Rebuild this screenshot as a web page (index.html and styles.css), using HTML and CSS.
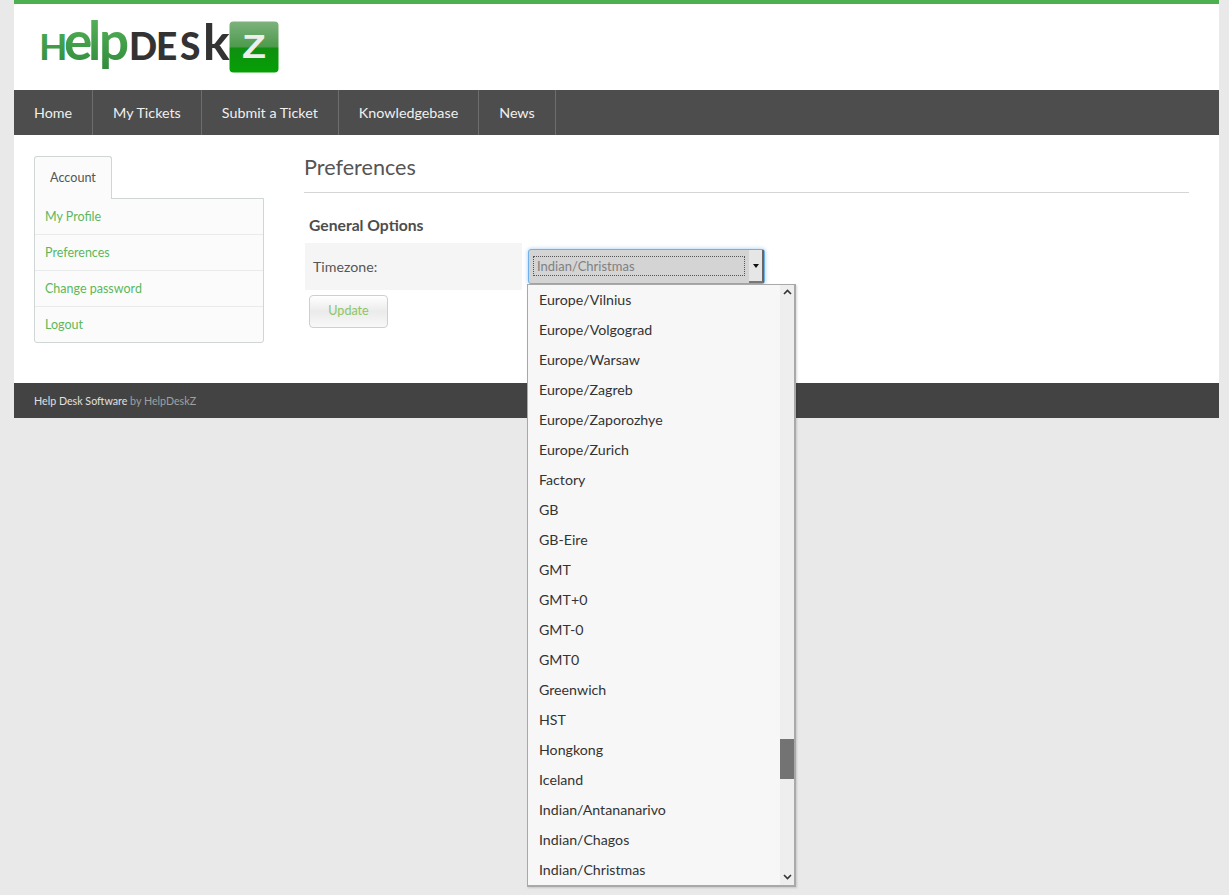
FILE: index.html
```html
<!DOCTYPE html>
<html lang="en">
<head>
  <meta charset="UTF-8" />
  <meta name="viewport" content="width=device-width, initial-scale=1.0" />
  <title>Preferences</title>
  <link rel="stylesheet" href="styles.css">
</head>
<body>
  <div class="wrapper">
    <header class="header">
      <svg class="logo" width="242" height="56" viewBox="0 0 242 56" xmlns="http://www.w3.org/2000/svg">
        <defs>
          <linearGradient id="help" x1="0" y1="0" x2="0" y2="1">
            <stop offset="0" stop-color="#5cb85c"/>
            <stop offset="1" stop-color="#2f8a3c"/>
          </linearGradient>
          <linearGradient id="box" x1="0" y1="0" x2="0" y2="1">
            <stop offset="0" stop-color="#7db27d"/>
            <stop offset="0.5" stop-color="#4c9a4c"/>
            <stop offset="0.52" stop-color="#0f8f0f"/>
            <stop offset="1" stop-color="#05a005"/>
          </linearGradient>
        </defs>
        <text y="40" class="logo-word" fill="url(#help)"><tspan x="0" class="logo-cap">H</tspan><tspan x="25" class="logo-low">e</tspan><tspan x="49" class="logo-low">l</tspan><tspan x="60" class="logo-low">p</tspan></text>
        <text y="40" class="logo-word logo-dark" fill="#333333"><tspan x="90" class="logo-cap">D</tspan><tspan x="117" class="logo-cap">E</tspan><tspan x="141" class="logo-cap">S</tspan><tspan x="164" class="logo-k">k</tspan></text>
        <rect x="190.5" y="1.5" width="49" height="51" rx="4" fill="url(#box)"/>
        <text x="203" y="38" class="logo-z" fill="#eeeeee" textLength="24" lengthAdjust="spacingAndGlyphs">Z</text>
      </svg>
    </header>

    <nav class="nav">
      <a href="#">Home</a>
      <a href="#">My Tickets</a>
      <a href="#">Submit a Ticket</a>
      <a href="#">Knowledgebase</a>
      <a href="#">News</a>
    </nav>

    <div class="content">
      <aside class="sidebar">
        <div class="tab">Account</div>
        <ul class="side-menu">
          <li><a href="#">My Profile</a></li>
          <li><a href="#">Preferences</a></li>
          <li><a href="#">Change password</a></li>
          <li><a href="#">Logout</a></li>
        </ul>
      </aside>

      <main class="main">
        <h1>Preferences</h1>
        <h2>General Options</h2>
        <div class="form-row">
          <div class="form-label">Timezone:</div>
          <div class="form-field">
            <div class="select">
              <span class="select-value"><span>Indian/Christmas</span></span>
              <span class="select-btn"><span class="caret"></span></span>
            </div>
            <div class="dropdown">
              <ul class="options" id="options"></ul>
              <div class="scrollbar">
                <svg class="arrow-up" width="9" height="6" viewBox="0 0 9 6"><path d="M1 5 L4.5 1.5 L8 5" fill="none" stroke="#333" stroke-width="1.6"/></svg>
                <div class="thumb"></div>
                <svg class="arrow-down" width="9" height="6" viewBox="0 0 9 6"><path d="M1 1 L4.5 4.5 L8 1" fill="none" stroke="#333" stroke-width="1.6"/></svg>
              </div>
            </div>
          </div>
        </div>
        <button class="btn" type="button">Update</button>
      </main>
    </div>

    <footer class="footer">Help Desk Software <span>by HelpDeskZ</span></footer>
  </div>

  <script>
    const zones = ['Europe/Vilnius', 'Europe/Volgograd', 'Europe/Warsaw', 'Europe/Zagreb', 'Europe/Zaporozhye',
      'Europe/Zurich', 'Factory', 'GB', 'GB-Eire', 'GMT', 'GMT+0', 'GMT-0', 'GMT0', 'Greenwich', 'HST',
      'Hongkong', 'Iceland', 'Indian/Antananarivo', 'Indian/Chagos', 'Indian/Christmas'];
    const list = document.getElementById('options');
    zones.forEach(zone => {
      const li = document.createElement('li');
      li.textContent = zone;
      list.appendChild(li);
    });
  </script>
</body>
</html>
```

FILE: styles.css
```css
html, body {
  height: 100%;
}
body {
  font-family: Lato, "Open Sans", sans-serif;
  margin: 0;
  padding: 0 10px 0 14px;
  background-color: #e9e9e9;
  color: #555555;
  font-size: 14px;
}
a {
  text-decoration: none;
}
ul {
  list-style: none;
  margin: 0;
  padding: 0;
}
.wrapper {
  background: white;
  border-top: 4px solid #4caf50;
}
.header {
  height: 86px;
  box-sizing: border-box;
  padding: 16px 0 0 25px;
}
.logo {
  display: block;
  overflow: visible;
}
.logo-word {
  font-family: Lato, sans-serif;
  font-weight: 700;
}
.logo-dark {
  font-weight: 900;
}
.logo-cap {
  font-size: 37px;
}
.logo-low {
  font-size: 53px;
}
.logo-k {
  font-size: 50px;
  font-weight: 700;
}
.logo-z {
  font-family: "Liberation Sans", sans-serif;
  font-size: 33px;
  font-weight: 700;
}
.nav {
  display: flex;
  height: 45px;
  background: #4d4d4d;
}
.nav a {
  padding: 0 20px;
  line-height: 45px;
  color: #f0f0f0;
  font-size: 14.3px;
  border-right: 1px solid #6d6d6d;
}
.content {
  display: flex;
  height: 248px;
  box-sizing: border-box;
  padding: 21px 30px 0 20px;
}
.sidebar {
  width: 230px;
  margin-right: 40px;
  flex-shrink: 0;
}
.tab {
  width: 78px;
  height: 43px;
  box-sizing: border-box;
  line-height: 42px;
  text-align: center;
  font-size: 12.6px;
  background: #fbfbfb;
  border: 1px solid #d0d5d5;
  border-bottom: none;
  border-radius: 3px 3px 0 0;
  position: relative;
  z-index: 1;
}
.side-menu {
  margin-top: -1px;
  background: #fbfbfb;
  border: 1px solid #d0d5d5;
  border-radius: 0 0 3px 3px;
}
.side-menu li {
  height: 36px;
  box-sizing: border-box;
  padding-left: 10px;
  line-height: 35px;
  font-size: 12.5px;
  border-bottom: 1px solid #e9eaea;
}
.side-menu li:last-child {
  border-bottom: none;
  height: 35px;
}
.side-menu a {
  color: #5cb85c;
}
.main {
  flex: 1;
}
h1 {
  margin: 0 0 20px;
  padding-bottom: 14px;
  line-height: 22px;
  font-size: 21.6px;
  font-weight: normal;
  border-bottom: 1px solid #d5d5d5;
}
h2 {
  margin: 0 0 6px 5px;
  font-size: 15.7px;
  line-height: 24px;
  color: #4d4d4d;
}
.form-row {
  display: flex;
  height: 47px;
}
.form-label {
  width: 217px;
  margin-left: 1px;
  box-sizing: border-box;
  padding-left: 8px;
  line-height: 47px;
  background: #f5f5f5;
  font-size: 14.2px;
}
.form-field {
  position: relative;
  flex: 1;
  padding: 6px 0 0 6px;
}
.select {
  display: flex;
  width: 237px;
  height: 35px;
  box-sizing: border-box;
  background: #d4d4d4;
  border: 1px solid #70b0e8;
  border-radius: 3px;
  box-shadow: 0 0 4px rgba(100, 170, 230, 0.6);
}
.select-value {
  flex: 1;
  padding: 6px 4px 6px 4px;
}
.select-value span {
  display: block;
  height: 20px;
  line-height: 19px;
  box-sizing: border-box;
  padding-left: 3px;
  font-size: 13px;
  color: #808080;
  border: 1px dotted #555;
}
.select-btn {
  display: flex;
  align-items: center;
  justify-content: center;
  width: 13px;
  background: #e6e6e6;
  border-right: 2px solid #666;
  border-bottom: 2px solid #777;
}
.caret {
  border-top: 4px solid #111;
  border-left: 3px solid transparent;
  border-right: 3px solid transparent;
}
.dropdown {
  position: absolute;
  left: 5px;
  top: 41px;
  z-index: 5;
  display: flex;
  width: 269px;
  height: 603px;
  box-sizing: border-box;
  background: #f7f7f7;
  border: 1px solid #a9a9a9;
  border-right-width: 2px;
  border-bottom-width: 2px;
  box-shadow: 1px 1px 2px rgba(0, 0, 0, 0.15);
}
.options {
  flex: 1;
}
.options li {
  height: 30px;
  line-height: 30px;
  padding-left: 11px;
  font-size: 14.2px;
  color: #333;
}
.scrollbar {
  position: relative;
  width: 14px;
  background: #eeeeee;
}
.thumb {
  position: absolute;
  left: 0;
  top: 454px;
  width: 14px;
  height: 40px;
  background: #737373;
}
.arrow-up,
.arrow-down {
  position: absolute;
  left: 3px;
}
.arrow-up {
  top: 4px;
}
.arrow-down {
  bottom: 5px;
}
.btn {
  display: block;
  margin: 5px 0 0 5px;
  padding: 0 0 2px;
  width: 79px;
  height: 33px;
  font-family: inherit;
  font-size: 12.6px;
  color: #8cc665;
  background: linear-gradient(#ffffff, #ebebeb 50%, #f8f8f8);
  border: 1px solid #cfcfcf;
  border-radius: 4px;
}
.footer {
  height: 35px;
  box-sizing: border-box;
  padding-left: 20px;
  line-height: 35px;
  font-size: 10.7px;
  color: #e0e0e0;
  background: #434343;
}
.footer span {
  color: #a0a0a0;
}
```
